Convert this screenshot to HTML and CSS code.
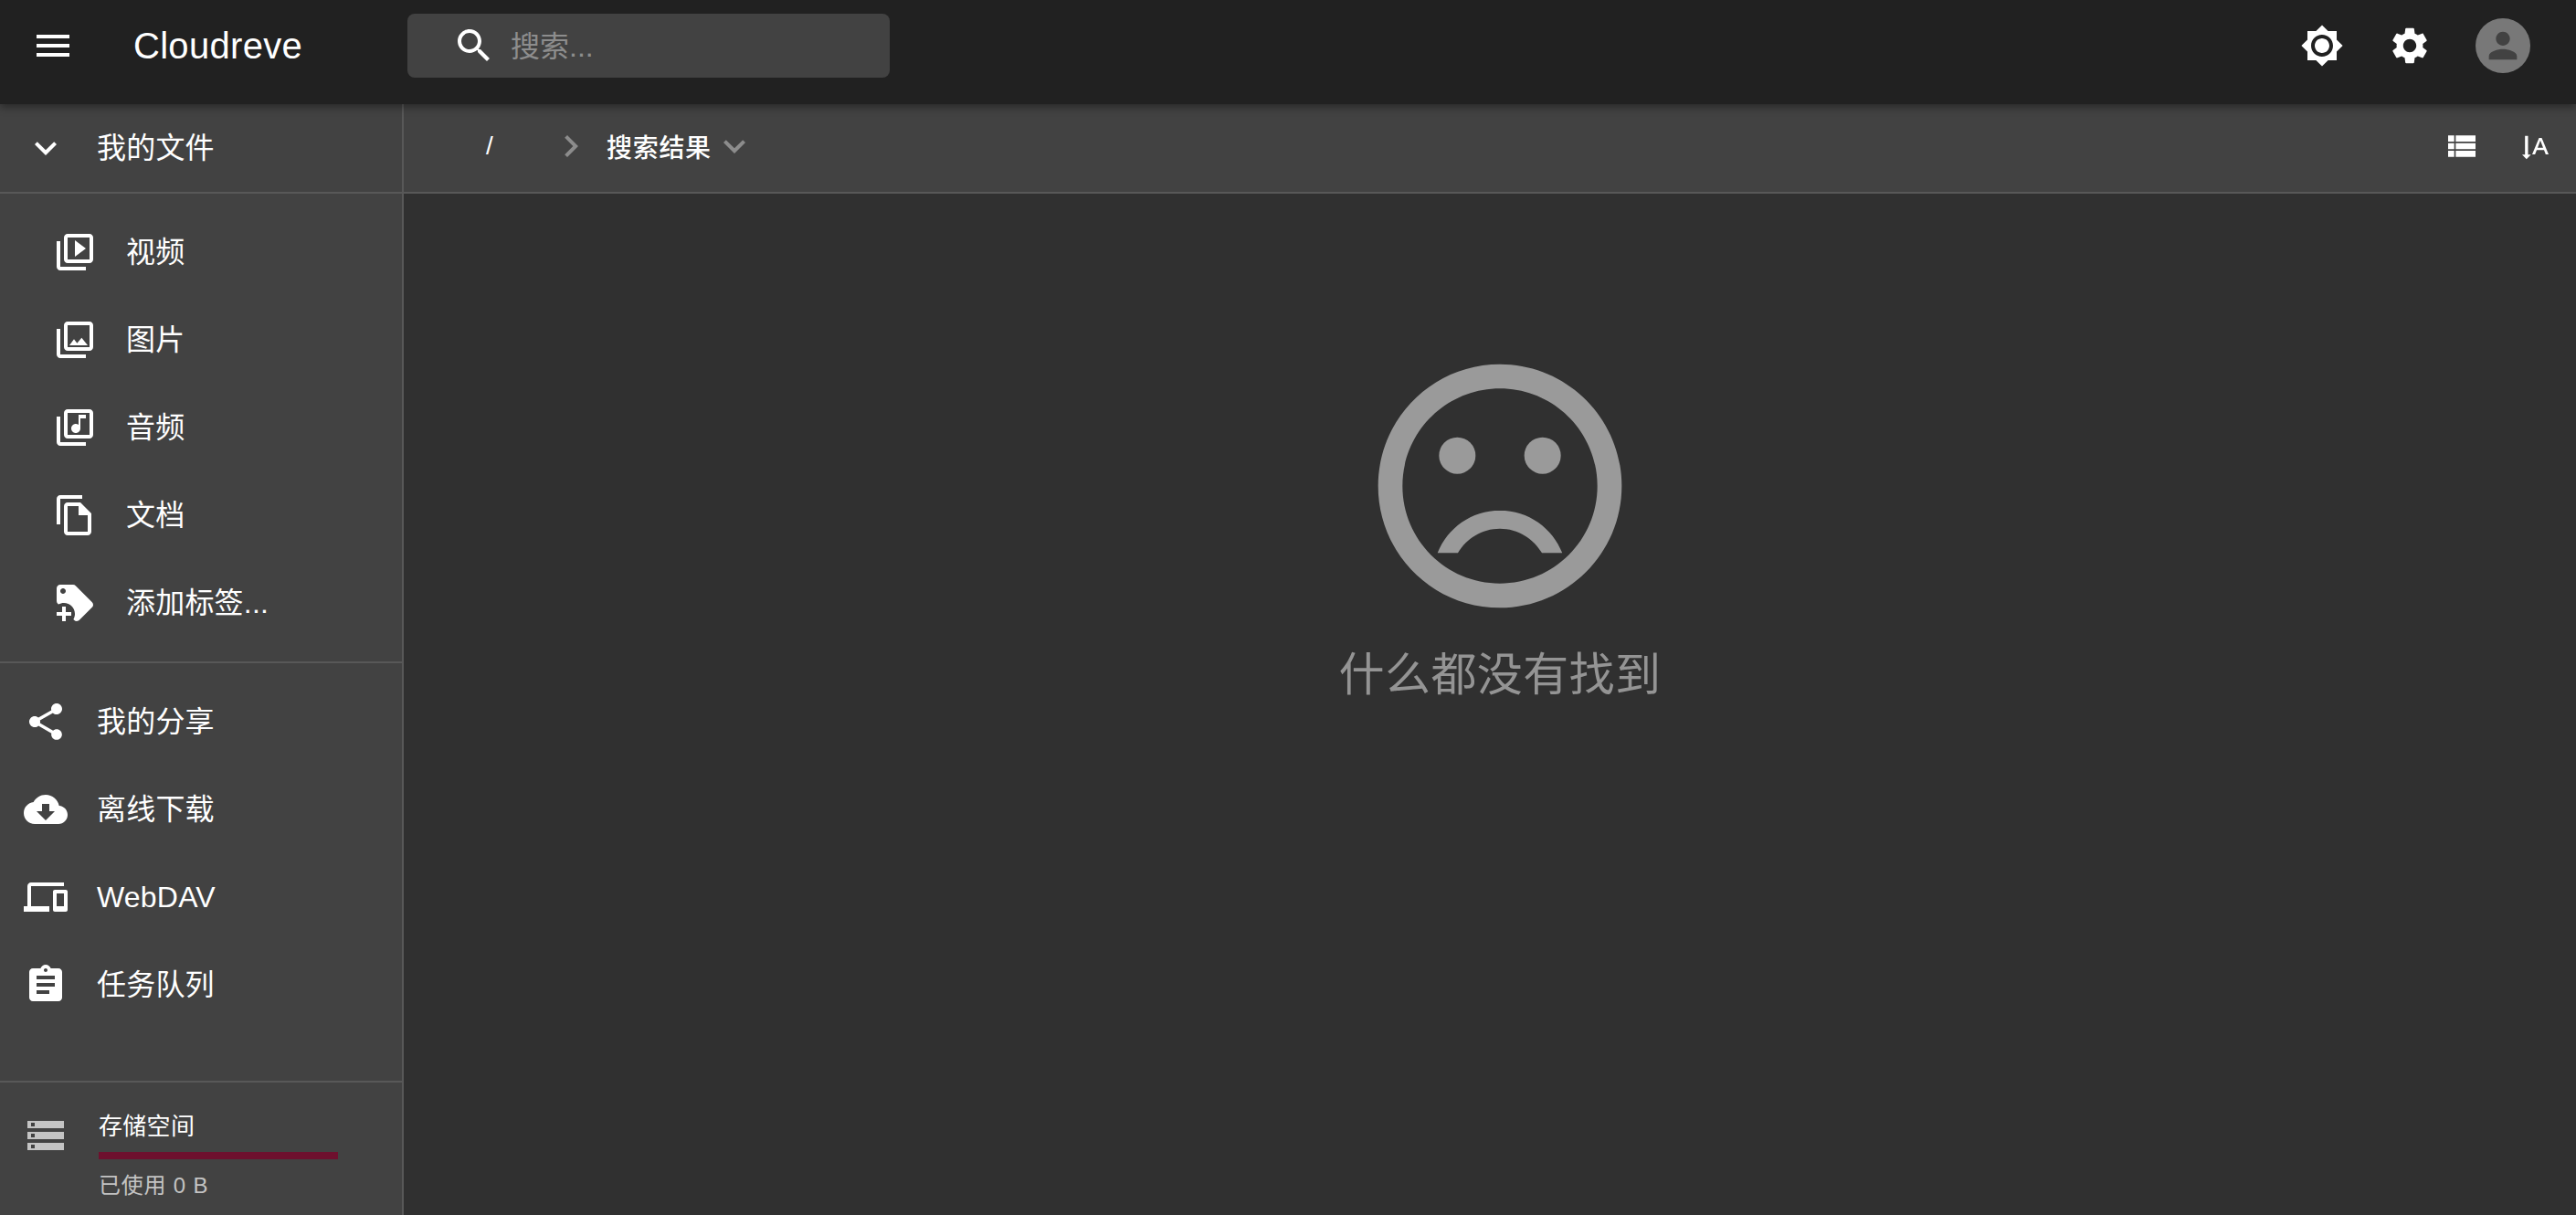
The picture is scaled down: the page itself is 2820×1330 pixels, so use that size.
FILE: index.html
```html
<!DOCTYPE html>
<html lang="zh-CN">
<head>
<meta charset="utf-8">
<title>Cloudreve</title>
<link rel="stylesheet" href="styles.css">
</head>
<body>
<header class="appbar">
  <div class="toolbar">
    <svg class="icon menu-icon" viewBox="0 0 24 24"><path d="M3 18h18v-2H3v2zm0-5h18v-2H3v2zm0-7v2h18V6H3z"/></svg>
    <div class="brand">Cloudreve</div>
    <div class="search">
      <svg class="icon" viewBox="0 0 24 24"><path d="M15.5 14h-.79l-.28-.27C15.41 12.59 16 11.11 16 9.5 16 5.91 13.09 3 9.5 3S3 5.91 3 9.5 5.91 16 9.5 16c1.61 0 3.09-.59 4.23-1.57l.27.28v.79l5 4.99L20.49 19l-4.99-5zm-6 0C7.01 14 5 11.99 5 9.5S7.01 5 9.5 5 14 7.01 14 9.5 11.99 14 9.5 14z"/></svg>
      <span class="search-text">搜索...</span>
    </div>
    <div class="spacer"></div>
    <svg class="icon tool-sun" viewBox="0 0 24 24"><path d="M20 8.69V4h-4.69L12 .69 8.69 4H4v4.69L.69 12 4 15.31V20h4.69L12 23.31 15.31 20H20v-4.69L23.31 12 20 8.69zM12 18c-3.31 0-6-2.69-6-6s2.69-6 6-6 6 2.69 6 6-2.69 6-6 6zm0-10c-2.21 0-4 1.79-4 4s1.79 4 4 4 4-1.79 4-4-1.79-4-4-4z"/></svg>
    <svg class="icon tool-gear" viewBox="0 0 24 24"><path d="M19.14 12.94c.04-.3.06-.61.06-.94 0-.32-.02-.64-.07-.94l2.03-1.58c.18-.14.23-.41.12-.61l-1.92-3.32c-.12-.22-.37-.29-.59-.22l-2.39.96c-.5-.38-1.03-.7-1.62-.94l-.36-2.54c-.04-.24-.24-.41-.48-.41h-3.84c-.24 0-.43.17-.47.41l-.36 2.54c-.59.24-1.13.57-1.62.94l-2.39-.96c-.22-.08-.47 0-.59.22L2.74 8.87c-.12.21-.08.47.12.61l2.03 1.58c-.05.3-.09.63-.09.94s.02.64.07.94l-2.03 1.58c-.18.14-.23.41-.12.61l1.92 3.32c.12.22.37.29.59.22l2.39-.96c.5.38 1.03.7 1.62.94l.36 2.54c.05.24.24.41.48.41h3.84c.24 0 .44-.17.47-.41l.36-2.54c.59-.24 1.13-.56 1.62-.94l2.39.96c.22.08.47 0 .59-.22l1.92-3.32c.12-.22.07-.47-.12-.61l-2.01-1.58zM12 15.6c-1.98 0-3.6-1.62-3.6-3.6s1.62-3.6 3.6-3.6 3.6 1.62 3.6 3.6-1.62 3.6-3.6 3.6z"/></svg>
    <div class="avatar">
      <svg class="avatar-icon" viewBox="0 0 24 24"><path d="M12 12c2.21 0 4-1.79 4-4s-1.79-4-4-4-4 1.79-4 4 1.79 4 4 4zm0 2c-2.67 0-8 1.34-8 4v2h16v-2c0-2.66-5.33-4-8-4z"/></svg>
    </div>
  </div>
</header>
<div class="layout">
  <aside class="sidebar">
    <div class="files-head">
      <svg class="icon" viewBox="0 0 24 24"><path d="M16.59 8.59L12 13.17 7.41 8.59 6 10l6 6 6-6z"/></svg>
      <span class="label">我的文件</span>
    </div>
    <nav class="list nested">
      <div class="row"><svg class="icon" viewBox="0 0 24 24"><path d="M4 6H2v14c0 1.1.9 2 2 2h14v-2H4V6zm16-4H8c-1.1 0-2 .9-2 2v12c0 1.1.9 2 2 2h12c1.1 0 2-.9 2-2V4c0-1.1-.9-2-2-2zm0 14H8V4h12v12zM12 5.5v9l6-4.5z"/></svg><span class="label">视频</span></div>
      <div class="row"><svg class="icon" viewBox="0 0 24 24"><path d="M20 4v12H8V4h12m0-2H8c-1.1 0-2 .9-2 2v12c0 1.1.9 2 2 2h12c1.1 0 2-.9 2-2V4c0-1.1-.9-2-2-2zm-8.5 9.67l1.69 2.26 2.48-3.1L19 15H9zM2 6v14c0 1.1.9 2 2 2h14v-2H4V6H2z"/></svg><span class="label">图片</span></div>
      <div class="row"><svg class="icon" viewBox="0 0 24 24"><path d="M20 2H8c-1.1 0-2 .9-2 2v12c0 1.1.9 2 2 2h12c1.1 0 2-.9 2-2V4c0-1.1-.9-2-2-2zm0 14H8V4h12v12zm-7.5-1c1.38 0 2.5-1.12 2.5-2.5V7h3V5h-4v5.51c-.42-.32-.93-.51-1.5-.51-1.38 0-2.5 1.12-2.5 2.5s1.12 2.5 2.5 2.5zM4 22h14v-2H4V6H2v14c0 1.1.9 2 2 2z"/></svg><span class="label">音频</span></div>
      <div class="row"><svg class="icon" viewBox="0 0 24 24"><path d="M16 1H4c-1.1 0-2 .9-2 2v14h2V3h12V1zm-1 4H8c-1.1 0-1.99.9-1.99 2L6 21c0 1.1.89 2 1.99 2H19c1.1 0 2-.9 2-2V11l-6-6zM8 21V7h6v5h5v9H8z"/></svg><span class="label">文档</span></div>
      <div class="row"><svg class="icon" viewBox="0 0 24 24"><path d="M21.41,11.58L12.41,2.58C12.05,2.22 11.55,2 11,2H4C2.89,2 2,2.89 2,4V11C2,11.55 2.22,12.05 2.59,12.41L3,12.81C3.9,12.27 4.94,12 6,12C9.31,12 12,14.69 12,18C12,19.06 11.72,20.09 11.18,21L11.58,21.4C11.95,21.78 12.45,22 13,22C13.55,22 14.05,21.78 14.41,21.41L21.41,14.41C21.78,14.05 22,13.55 22,13C22,12.45 21.78,11.95 21.41,11.58M5.5,7C4.67,7 4,6.33 4,5.5C4,4.67 4.67,4 5.5,4C6.33,4 7,4.67 7,5.5C7,6.33 6.33,7 5.5,7M10,19H7V22H5V19H2V17H5V14H7V17H10V19Z"/></svg><span class="label">添加标签...</span></div>
    </nav>
    <nav class="list top">
      <div class="row"><svg class="icon" viewBox="0 0 24 24"><path d="M18 16.08c-.76 0-1.44.3-1.96.77L8.91 12.7c.05-.23.09-.46.09-.7s-.04-.47-.09-.7l7.05-4.11c.54.5 1.25.81 2.04.81 1.66 0 3-1.34 3-3s-1.34-3-3-3-3 1.34-3 3c0 .24.04.47.09.7L8.04 9.81C7.5 9.31 6.79 9 6 9c-1.66 0-3 1.34-3 3s1.34 3 3 3c.79 0 1.5-.31 2.04-.81l7.12 4.16c-.05.21-.08.43-.08.65 0 1.61 1.31 2.92 2.92 2.92 1.61 0 2.92-1.31 2.92-2.92s-1.31-2.92-2.92-2.92z"/></svg><span class="label">我的分享</span></div>
      <div class="row"><svg class="icon" viewBox="0 0 24 24"><path d="M19.35 10.04C18.67 6.59 15.64 4 12 4 9.11 4 6.6 5.64 5.35 8.04 2.34 8.36 0 10.91 0 14c0 3.31 2.69 6 6 6h13c2.76 0 5-2.24 5-5 0-2.64-2.05-4.78-4.65-4.96zM17 13l-5 5-5-5h3V9h4v4h3z"/></svg><span class="label">离线下载</span></div>
      <div class="row"><svg class="icon" viewBox="0 0 24 24"><path d="M4 6h18V4H4c-1.1 0-2 .9-2 2v11H0v3h14v-3H4V6zm19 2h-6c-.55 0-1 .45-1 1v10c0 .55.45 1 1 1h6c.55 0 1-.45 1-1V9c0-.55-.45-1-1-1zm-1 9h-4v-7h4v7z"/></svg><span class="label">WebDAV</span></div>
      <div class="row"><svg class="icon" viewBox="0 0 24 24"><path d="M19 3h-4.18C14.4 1.84 13.3 1 12 1c-1.3 0-2.4.84-2.82 2H5c-1.1 0-2 .9-2 2v14c0 1.1.9 2 2 2h14c1.1 0 2-.9 2-2V5c0-1.1-.9-2-2-2zm-7 0c.55 0 1 .45 1 1s-.45 1-1 1-1-.45-1-1 .45-1 1-1zm2 14H7v-2h7v2zm3-4H7v-2h10v2zm0-4H7V7h10v2z"/></svg><span class="label">任务队列</span></div>
    </nav>
    <div class="storage">
      <svg class="icon storage-icon" viewBox="0 0 24 24"><path d="M2 20h20v-4H2v4zm2-3h2v2H4v-2zM2 4v4h20V4H2zm4 3H4V5h2v2zm-4 7h20v-4H2v4zm2-3h2v2H4v-2z"/></svg>
      <div class="storage-body">
        <div class="storage-title">存储空间</div>
        <div class="storage-bar"></div>
        <div class="storage-used">已使用 0 B</div>
      </div>
    </div>
  </aside>
  <main class="main">
    <div class="crumbs">
      <span class="slash">/</span>
      <svg class="icon crumb-chevron" viewBox="0 0 24 24"><path d="M10 6L8.59 7.41 13.17 12l-4.58 4.59L10 18l6-6z"/></svg>
      <span class="crumb-current">搜索结果</span>
      <svg class="icon crumb-down" viewBox="0 0 24 24"><path d="M16.59 8.59L12 13.17 7.41 8.59 6 10l6 6 6-6z"/></svg>
      <div class="spacer"></div>
      <svg class="icon small-list" viewBox="0 0 24 24"><path d="M3 14h4v-4H3v4zm0 5h4v-4H3v4zM3 9h4V5H3v4zm5 5h13v-4H8v4zm0 5h13v-4H8v4zM8 5v4h13V5H8z"/></svg>
      <svg class="icon small-sort" viewBox="0 0 24 24"><path d="M6.1 5.2h2v12.4H10l-2.9 3-2.9-3h1.9z"/><path fill-rule="evenodd" d="M15.3 6.6h1.8l4.5 10.8h-1.9l-1.1-2.9h-4.8l-1.1 2.9h-1.9zM14.4 13h3.6l-1.8-4.7z"/></svg>
    </div>
    <section class="empty">
      <svg class="empty-icon" viewBox="0 0 24 24"><path d="M11.99 2C6.47 2 2 6.48 2 12s4.47 10 9.99 10C17.52 22 22 17.52 22 12S17.52 2 11.99 2zM12 20c-4.42 0-8-3.58-8-8s3.58-8 8-8 8 3.58 8 8-3.58 8-8 8z"/><circle cx="8.5" cy="9.5" r="1.5"/><circle cx="15.5" cy="9.5" r="1.5"/><path d="M12 14c-2.33 0-4.32 1.45-5.12 3.5h1.67c.69-1.19 1.97-2 3.45-2s2.75.81 3.45 2h1.67c-.8-2.05-2.79-3.5-5.12-3.5z"/></svg>
      <div class="empty-text">什么都没有找到</div>
    </section>
  </main>
</div>
</body>
</html>
```

FILE: styles.css
```css
* { box-sizing: border-box; }
html, body { margin: 0; height: 100%; }
body {
  width: 2820px;
  height: 1330px;
  overflow: hidden;
  background: #303030;
  color: #fff;
  font-family: "Liberation Sans", "Noto Sans CJK SC", sans-serif;
  display: flex;
  flex-direction: column;
}
.icon { width: 48px; height: 48px; fill: currentColor; flex: none; display: block; }
.spacer { flex: 1; }

.appbar {
  height: 114px;
  flex: none;
  background: #212121;
  position: relative;
  z-index: 2;
  box-shadow: 0 4px 8px rgba(0, 0, 0, .35);
}
.toolbar { height: 100px; display: flex; align-items: center; padding-left: 34px; padding-right: 50px; }
.menu-icon { margin-right: 64px; }
.brand { width: 300px; font-size: 40px; line-height: 48px; letter-spacing: .3px; }
.search {
  width: 528px;
  height: 70px;
  background: #424242;
  border-radius: 8px;
  display: flex;
  align-items: center;
  padding-left: 49px;
}
.search-text { margin: 1px 0 0 16px; font-size: 32px; line-height: 44px; color: #8d8d8d; }
.tool-sun { margin-right: 48px; }
.tool-gear { margin-right: 48px; }
.avatar {
  width: 60px;
  height: 60px;
  border-radius: 50%;
  background: #787878;
  color: #424242;
  display: flex;
  align-items: center;
  justify-content: center;
}
.avatar-icon { width: 46px; height: 46px; fill: currentColor; }

.layout { flex: 1; display: flex; min-height: 0; }
.sidebar {
  width: 442px;
  flex: none;
  background: #424242;
  border-right: 2px solid #585858;
  display: flex;
  flex-direction: column;
}
.files-head {
  height: 98px;
  display: flex;
  align-items: center;
  padding: 0 0 0 26px;
  border-bottom: 2px solid #585858;
}
.label { font-size: 32px; line-height: 48px; color: #fff; letter-spacing: .2px; }
.files-head .label { margin-left: 32px; }
.row { height: 96px; display: flex; align-items: center; }
.row .label { margin-left: 32px; }
.list.nested { padding: 16px 0 16px 58px; border-bottom: 2px solid #585858; }
.list.top { padding: 16px 0 0 26px; flex: 1; }
.storage {
  height: 147px;
  flex: none;
  border-top: 2px solid #585858;
  display: flex;
  padding: 34px 0 0 26px;
}
.storage-icon { color: #c4c4c4; }
.storage-body { margin-left: 34px; width: 262px; }
.storage-title { font-size: 26px; line-height: 32px; margin-top: -2px; letter-spacing: .3px; }
.storage-bar { height: 8px; background: #6e102e; margin-top: 12px; }
.storage-used { font-size: 24px; line-height: 32px; color: rgba(255, 255, 255, .7); margin-top: 13px; letter-spacing: .8px; }

.main { flex: 1; display: flex; flex-direction: column; min-width: 0; }
.crumbs {
  height: 98px;
  flex: none;
  background: #424242;
  border-bottom: 2px solid #585858;
  display: flex;
  align-items: center;
  padding: 0 26px 4px 0;
}
.slash { margin-left: 90px; font-size: 28px; width: 69px; }
.crumb-chevron { color: #8c8c8c; }
.crumb-current { margin-left: 15px; font-size: 28px; font-weight: 500; letter-spacing: .7px; }
.crumb-down { color: #8c8c8c; margin-left: 1px; }
.small-list { width: 40px; height: 40px; margin-right: -1px; }
.small-sort { width: 40px; height: 40px; margin-left: 40px; }
.empty {
  flex: 1;
  display: flex;
  flex-direction: column;
  align-items: center;
  padding: 160px 0 0 22px;
  color: #9a9a9a;
}
.empty-icon { width: 320px; height: 320px; fill: currentColor; display: block; }
.empty-text { font-size: 50px; line-height: 60px; margin-top: 17px; color: #949494; letter-spacing: .4px; }
```
